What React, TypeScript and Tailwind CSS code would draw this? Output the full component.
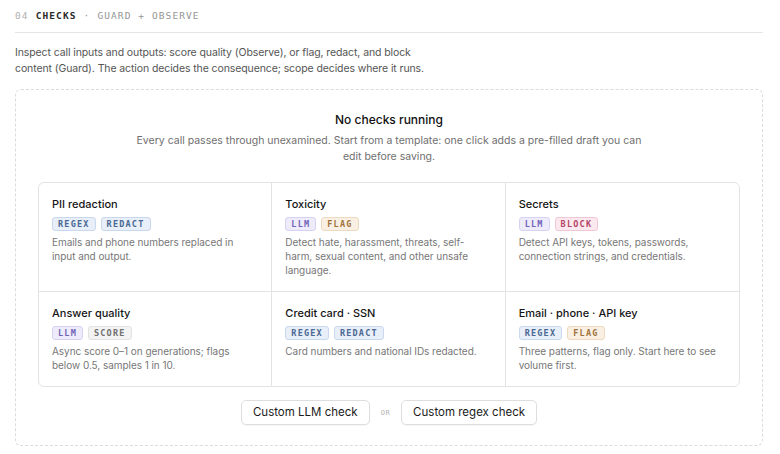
type Tone = "blue" | "violet" | "amber" | "rose" | "gray";

const toneClass: Record<Tone, string> = {
  blue: "bg-[#e8eff8] border-[#c9d8ec] text-[#4a6893]",
  violet: "bg-[#eeebfb] border-[#d8d2f2] text-[#7163b8]",
  amber: "bg-[#f9f0e3] border-[#ecdbc0] text-[#a0733c]",
  rose: "bg-[#fbe9ef] border-[#f0c8d5] text-[#b44569]",
  gray: "bg-[#f3f3f3] border-[#e2e2e2] text-[#707070]",
};

const templates: {
  title: string;
  tags: [string, Tone][];
  body: string;
}[] = [
  {
    title: "PII redaction",
    tags: [["REGEX", "blue"], ["REDACT", "blue"]],
    body: "Emails and phone numbers replaced in input and output.",
  },
  {
    title: "Toxicity",
    tags: [["LLM", "violet"], ["FLAG", "amber"]],
    body: "Detect hate, harassment, threats, self-harm, sexual content, and other unsafe language.",
  },
  {
    title: "Secrets",
    tags: [["LLM", "violet"], ["BLOCK", "rose"]],
    body: "Detect API keys, tokens, passwords, connection strings, and credentials.",
  },
  {
    title: "Answer quality",
    tags: [["LLM", "violet"], ["SCORE", "gray"]],
    body: "Async score 0–1 on generations; flags below 0.5, samples 1 in 10.",
  },
  {
    title: "Credit card · SSN",
    tags: [["REGEX", "blue"], ["REDACT", "blue"]],
    body: "Card numbers and national IDs redacted.",
  },
  {
    title: "Email · phone · API key",
    tags: [["REGEX", "blue"], ["FLAG", "amber"]],
    body: "Three patterns, flag only. Start here to see volume first.",
  },
];

function Tag({ label, tone }: { label: string; tone: Tone }) {
  return (
    <span
      className={`inline-flex h-[14px] items-center rounded-[3px] border px-[5px] font-['DejaVu_Sans_Mono',monospace] text-[8.5px] font-bold tracking-[1.2px] ${toneClass[tone]}`}
    >
      {label}
    </span>
  );
}

export default function App() {
  return (
    <div className="min-h-[454px] bg-white pl-[15px] pr-[17px] pt-[9px] font-['Inter',sans-serif] text-[#1a1a1a]">
      {/* section heading */}
      <div className="flex items-center border-b border-[#e6e6e6] pb-[9px] font-['DejaVu_Sans_Mono',monospace] text-[9.5px] tracking-[1.1px] text-[#959595]">
        <span className="text-[#b0b0b0]">04</span>
        <span className="ml-[7px] font-bold text-[#2a2a2a]">CHECKS</span>
        <span className="mx-[7px]">·</span>
        <span>GUARD + OBSERVE</span>
      </div>

      <p className="mt-[12px] max-w-[425px] text-[10.5px] leading-[16px] tracking-[-0.1px] text-[#555]">
        Inspect call inputs and outputs: score quality (Observe), or flag, redact, and block
        content (Guard). The action decides the consequence; scope decides where it runs.
      </p>

      {/* empty state */}
      <div className="mt-[12px] rounded-md border border-dashed border-[#dcdcdc] px-[22px] pb-[20px] pt-[21px]">
        <div className="text-center">
          <h3 className="text-[12px] font-medium leading-[18px] text-[#111]">No checks running</h3>
          <p className="mx-auto mt-[4px] max-w-[515px] text-[10.5px] leading-[16px] text-[#6f6f6f]">
            Every call passes through unexamined. Start from a template: one click adds a pre-filled
            draft you can edit before saving.
          </p>
        </div>

        <div className="mt-[17px] grid grid-cols-3 overflow-hidden rounded-md border border-[#e3e3e3]">
          {templates.map((t, i) => (
            <div
              key={t.title}
              className={`px-[13px] pb-[14px] pt-[13px] ${i % 3 !== 2 ? "border-r border-[#e3e3e3]" : ""} ${
                i < 3 ? "border-b border-[#e3e3e3]" : ""
              }`}
            >
              <div className="text-[11px] font-medium leading-[16px] text-[#151515]">{t.title}</div>
              <div className="mt-[5px] flex gap-[5px]">
                {t.tags.map(([label, tone]) => (
                  <Tag key={label} label={label} tone={tone} />
                ))}
              </div>
              <p className="mt-[4px] pr-[6px] text-[10px] leading-[14px] tracking-[-0.05px] text-[#777]">{t.body}</p>
            </div>
          ))}
        </div>

        <div className="mt-[13px] flex items-center justify-center gap-[11px]">
          <button className="h-[25px] rounded-[5px] border border-[#dedede] bg-white px-[11px] text-[11.5px] text-[#1a1a1a] shadow-[0_1px_1px_rgba(0,0,0,0.04)]">
            Custom LLM check
          </button>
          <span className="font-['DejaVu_Sans_Mono',monospace] text-[7px] tracking-[0.5px] text-[#b5b5b5]">OR</span>
          <button className="h-[25px] rounded-[5px] border border-[#dedede] bg-white px-[11px] text-[11.5px] text-[#1a1a1a] shadow-[0_1px_1px_rgba(0,0,0,0.04)]">
            Custom regex check
          </button>
        </div>
      </div>
    </div>
  );
}
